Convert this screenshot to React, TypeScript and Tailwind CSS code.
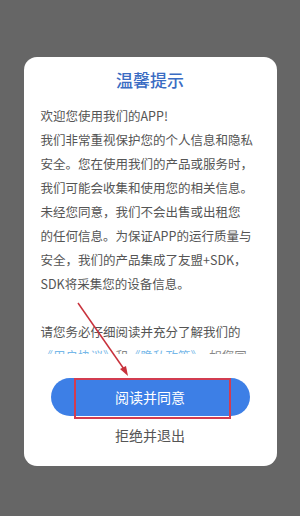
const lines = [
  "欢迎您使用我们的APP!",
  "我们非常重视保护您的个人信息和隐私",
  "安全。您在使用我们的产品或服务时，",
  "我们可能会收集和使用您的相关信息。",
  "未经您同意，我们不会出售或出租您",
  "的任何信息。为保证APP的运行质量与",
  "安全，我们的产品集成了友盟+SDK，",
  "SDK将采集您的设备信息。",
];

const App = () => {
  return (
    <div
      className="relative flex h-[516px] w-[300px] flex-col items-center bg-[#666666] pt-[57px]"
      style={{ fontFamily: '"Noto Sans CJK SC", "Noto Sans", sans-serif' }}
    >
      <div className="flex w-[253px] flex-col rounded-[13px] bg-white pt-[10px] pb-[21px]">
        <h2 className="text-center text-[17px] leading-[26px] font-medium text-[#3a6cc3]">
          温馨提示
        </h2>
        <div className="mt-[11px] h-[250px] overflow-hidden px-[17px] text-[12.5px] leading-[24px] text-[#555555]">
          {lines.map((line) => (
            <p key={line} className="whitespace-nowrap">
              {line}
            </p>
          ))}
          <p className="h-[24px]" />
          <p className="whitespace-nowrap">请您务必仔细阅读并充分了解我们的</p>
          <p className="whitespace-nowrap opacity-70">
            <span className="text-[#3d9be0]">《用户协议》</span>
            和
            <span className="text-[#3d9be0]">《隐私政策》</span>
            ，如您同
          </p>
        </div>
        <div className="relative mx-[27px] mt-[24px]">
          <button className="h-[38px] w-full rounded-full bg-[#3d7fe6] text-[14px] text-white">
            阅读并同意
          </button>
          <div className="absolute top-0 left-[23px] h-[41px] w-[157px] border-2 border-[#d23c50]" />
        </div>
        <button className="mt-[9px] text-[14px] leading-[20px] text-[#555555]">
          拒绝并退出
        </button>
      </div>
      <svg
        className="pointer-events-none absolute top-0 left-0"
        width="300"
        height="516"
        viewBox="0 0 300 516"
      >
        <line x1="78" y1="303" x2="126" y2="372" stroke="#c8323c" strokeWidth="1.5" />
        <path d="M128 376 L120 369 L126 366 Z" fill="#c8323c" />
      </svg>
    </div>
  );
};

export default App;
